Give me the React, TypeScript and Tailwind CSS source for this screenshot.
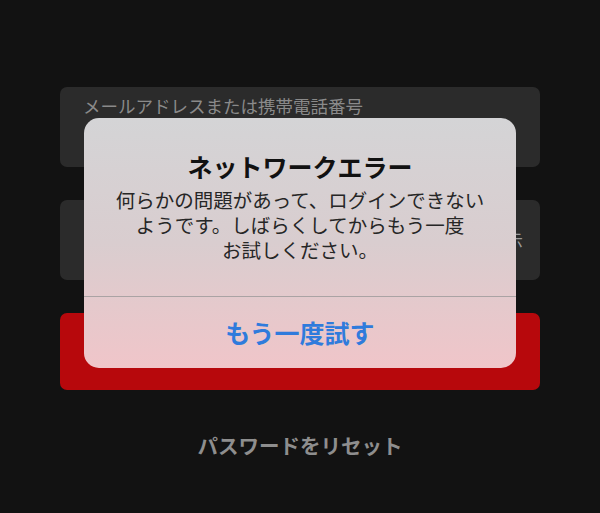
import React from 'react';

const jp = { fontFamily: '"Noto Sans CJK JP", "Noto Sans", sans-serif' };

function Field({ label, action }: { label?: string; action?: string }) {
  return (
    <div className="flex h-[80px] items-start justify-between rounded-[7px] bg-[#2b2b2b] pl-[23px] pr-[17px]">
      <span className="mt-[6px] text-[17.5px] leading-[26px] text-[#8a8a8a]">{label}</span>
      {action && (
        <span className="self-center text-[17.5px] text-[#9a9a9a]">{action}</span>
      )}
    </div>
  );
}

function ErrorDialog() {
  return (
    <div className="absolute left-[84px] top-[118px] flex h-[250px] w-[432px] flex-col overflow-hidden rounded-[15px] bg-gradient-to-b from-[#d4d4d6] via-[#d9cdcf] to-[#f0c5c9]">
      <div className="flex flex-1 flex-col items-center pt-[32px] text-center">
        <h2 className="text-[25px] font-bold leading-[32px] text-[#111]">ネットワークエラー</h2>
        <p className="mt-[5px] text-[19.5px] leading-[25px] text-[#262626]">
          何らかの問題があって、ログインできない
          <br />
          ようです。しばらくしてからもう一度
          <br />
          お試しください。
        </p>
      </div>
      <div className="h-px bg-[#aaa3a4]" />
      <button className="flex h-[71px] items-center justify-center text-[25px] font-bold text-[#2f7bdc]">
        もう一度試す
      </button>
    </div>
  );
}

export default function App() {
  return (
    <div className="relative h-[513px] w-[600px] overflow-hidden bg-[#121212]" style={jp}>
      <div className="flex flex-col px-[60px] pt-[87px]">
        <Field label="メールアドレスまたは携帯電話番号" />
        <div className="mt-[33px]">
          <Field action="表示" />
        </div>
        <div className="mt-[33px] h-[77px] rounded-[7px] bg-[#b7080c]" />
        <p className="mt-[40px] text-center text-[20.5px] font-bold leading-[30px] text-[#8e8e8e]">
          パスワードをリセット
        </p>
      </div>
      <ErrorDialog />
    </div>
  );
}
